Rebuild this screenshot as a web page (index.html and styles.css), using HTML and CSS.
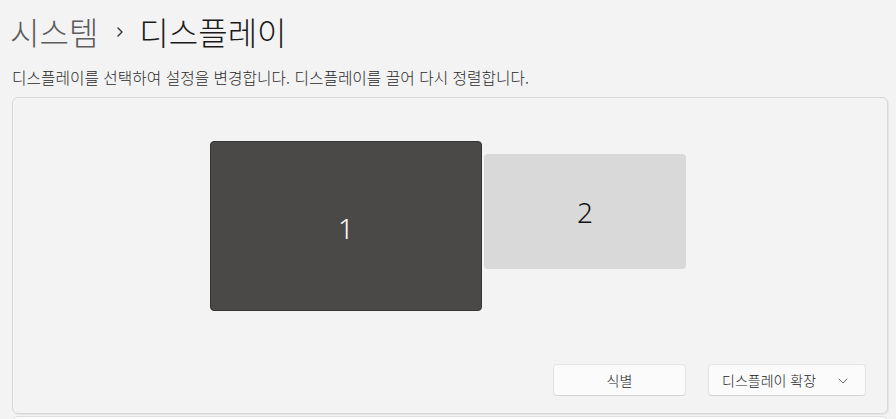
FILE: index.html
```html
<!DOCTYPE html>
<html lang="ko">
<head>
<meta charset="utf-8">
<link rel="stylesheet" href="styles.css">
</head>
<body>
<h1 class="title"><span class="crumb">시스템</span><svg class="sep" width="10" height="14" viewBox="0 0 10 14"><path d="M3 3 L7 7 L3 11" fill="none" stroke="#333" stroke-width="1.4" stroke-linecap="round" stroke-linejoin="round"/></svg><span class="current">디스플레이</span></h1>
<p class="desc">디스플레이를 선택하여 설정을 변경합니다. 디스플레이를 끌어 다시 정렬합니다.</p>
<div class="card">
  <div class="canvas">
    <div class="monitor primary">1</div>
    <div class="monitor secondary">2</div>
  </div>
  <div class="actions">
    <button class="btn identify">식별</button>
    <button class="btn dropdown"><span>디스플레이 확장</span><svg class="chev" width="10" height="6" viewBox="0 0 10 6"><path d="M1 1 L5 5 L9 1" fill="none" stroke="#6b6b6b" stroke-width="1" stroke-linecap="round" stroke-linejoin="round"/></svg></button>
  </div>
</div>
<div class="card next"></div>
</body>
</html>
```

FILE: styles.css
```css
html, body {
  margin: 0;
  padding: 0;
  background: #f3f3f3;
  overflow: hidden;
}
body {
  padding: 0 8px 0 12px;
  font-family: "Noto Sans CJK KR", "Noto Sans", sans-serif;
  color: #1b1b1b;
  height: 419px;
}
.title {
  margin: 0 0 0 -2px;
  padding-top: 12px;
  font-size: 32px;
  line-height: 38px;
  font-weight: 300;
  display: flex;
  align-items: center;
  white-space: nowrap;
}
.crumb {
  color: #5c5c5c;
}
.sep {
  margin: 2px 14px 0 17px;
}
.current {
  color: #1a1a1a;
}
.desc {
  margin: 18px 0 0 0;
  font-size: 15.75px;
  line-height: 20px;
  font-weight: 300;
  color: #2b2b2b;
  white-space: nowrap;
}
.card {
  margin-top: 9px;
  height: 315px;
  border: 1px solid #d9d9d9;
  border-radius: 6px;
  background: #f3f3f3;
  box-shadow: 1px 1px 0 #e6e6e6;
  display: flex;
  flex-direction: column;
}
.canvas {
  position: relative;
  flex: 1;
}
.monitor {
  position: absolute;
  display: flex;
  align-items: center;
  justify-content: center;
  border-radius: 4px;
  font-family: "Noto Sans", "Open Sans", sans-serif;
  font-size: 28px;
  font-weight: 300;
}
.primary {
  left: 197px;
  top: 43px;
  width: 270px;
  background: #4a4948;
  border: 1px solid #363534;
  color: #ffffff;
  padding-top: 4px;
  height: 164px;
}
.secondary {
  left: 471px;
  top: 56px;
  width: 202px;
  height: 115px;
  background: #d9d9d9;
  color: #111;
}
.actions {
  display: flex;
  justify-content: flex-end;
  gap: 22px;
  padding: 0 21px 17px 0;
}
.btn {
  height: 32px;
  border: 1px solid #e3e3e3;
  border-bottom-color: #d4d4d4;
  border-radius: 4px;
  background: #fbfbfb;
  font-family: "Noto Sans CJK KR", "Noto Sans", sans-serif;
  font-size: 14px;
  font-weight: 300;
  color: #1b1b1b;
  padding: 0;
  display: flex;
  align-items: center;
}
.identify {
  width: 133px;
  justify-content: center;
}
.dropdown {
  width: 158px;
  padding: 0 17px 0 13px;
  justify-content: space-between;
}
.chev {
  margin-top: 1px;
}
.next {
  margin-top: 2px;
  height: 60px;
  background: #fbfbfb;
  border-color: #e0e0e0;
}
```
